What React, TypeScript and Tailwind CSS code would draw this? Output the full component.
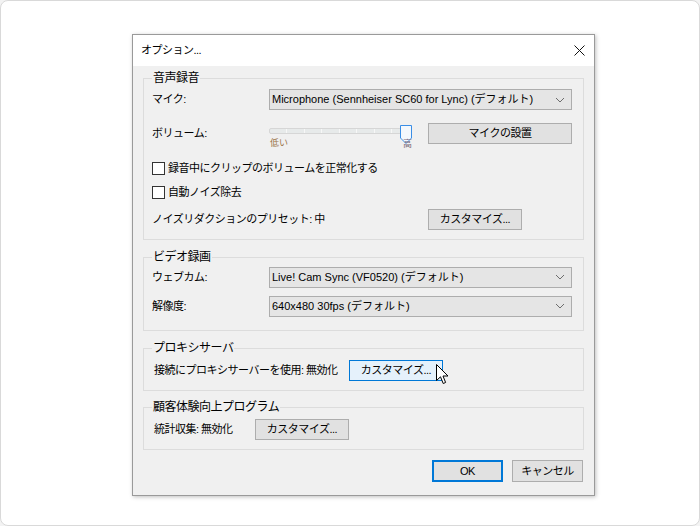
import React from "react";

const F = "font-['Liberation_Sans','Noto_Sans_CJK_JP',sans-serif]";
const J = "tracking-[-0.5px] whitespace-nowrap";

function Chevron() {
  return (
    <svg width="10" height="6" viewBox="0 0 10 6" className="shrink-0">
      <path d="M1 1 L5 5 L9 1" fill="none" stroke="#6d6d6d" strokeWidth="1" />
    </svg>
  );
}

function Select({ text }: { text: string }) {
  return (
    <div className="w-[303px] h-[21px] bg-[#e5e5e5] border border-[#adadad] flex items-center justify-between pl-[2px] pr-[6px] text-[11px] text-black">
      <span className="whitespace-nowrap">{text}</span>
      <Chevron />
    </div>
  );
}

function Btn({ text, w, hot, def }: { text: string; w: string; hot?: boolean; def?: boolean }) {
  const base = `h-[21px] flex items-center justify-center text-[11px] text-black shrink-0 ${J}`;
  let cls = "bg-[#e1e1e1] border border-[#adadad]";
  if (hot) cls = "bg-[#e5f1fb] border border-[#0078d7]";
  if (def) cls = "bg-[#e1e1e1] border-2 border-[#0078d7]";
  return <div className={`${base} ${cls} ${w}`}>{text}</div>;
}

function Group({
  title,
  children,
  className,
  legendClass,
}: {
  title: string;
  children: React.ReactNode;
  className?: string;
  legendClass?: string;
}) {
  return (
    <fieldset className={`border border-[#dcdcdc] ${className ?? ""}`}>
      <legend className={`px-[1px] text-[12px] leading-[16px] text-black ${J} ${legendClass ?? ""}`}>{title}</legend>
      {children}
    </fieldset>
  );
}

function Check({ text }: { text: string }) {
  return (
    <div className="flex items-center h-[16px] text-[11px] text-black">
      <div className="w-[13px] h-[13px] border border-[#333333] bg-white mr-[3px]" />
      <span className={J}>{text}</span>
    </div>
  );
}

function Slider() {
  return (
    <div className="relative w-[148px] h-[30px]">
      <div className="absolute left-0 top-[8px] w-[140px] h-[6px] rounded-[2px] border border-[#d6d6d6] bg-[#e7eaea] flex justify-between px-[16px]">
        {[0, 1, 2, 3, 4, 5, 6].map((i) => (
          <div key={i} className="w-px h-full bg-[#f7f7f7]" />
        ))}
      </div>
      <svg className="absolute left-[131px] top-[5px]" width="12" height="19" viewBox="0 0 12 19">
        <path d="M0.5 0.5 H11.5 V13 L6 18.5 L0.5 13 Z" fill="#f4f8fc" stroke="#3a8ee6" strokeWidth="1" />
      </svg>
      <span className="absolute left-[1px] top-[18px] text-[9px] leading-[11px] text-[#9a7448]">低い</span>
      <span className="absolute left-[134px] top-[19px] text-[9px] leading-[11px] text-[#7a6a7a]">高</span>
    </div>
  );
}

function Cursor() {
  return (
    <svg className="absolute left-[436px] top-[364px]" width="13" height="21" viewBox="0 0 13 21">
      <path d="M0.5 0.5 L0.5 16.5 L4.5 12.8 L7.2 19.5 L9.6 18.5 L7 12 L12 12 Z" fill="white" stroke="black" strokeWidth="1" strokeLinejoin="round" />
    </svg>
  );
}

export default function App() {
  return (
    <div className={`relative w-[700px] h-[526px] bg-[#f3f3f3] ${F}`}>
      <div className="w-[700px] h-[526px] bg-white border border-[#d9d9d9] rounded-[8px] pl-[131px] pt-[33px]">
        <div className="w-[463px] h-[462px] border border-[#9a9a9a] bg-[#f0f0f0] shadow-[1px_1px_4px_rgba(0,0,0,0.25)] flex flex-col">
          <div className="h-[31px] bg-white flex items-center justify-between pl-[8px] pr-[9px] shrink-0">
            <span className={`text-[11px] text-black ${J}`}>オプション...</span>
            <svg width="11" height="11" viewBox="0 0 11 11">
              <path d="M0.5 0.5 L10.5 10.5 M10.5 0.5 L0.5 10.5" stroke="#111" strokeWidth="1" />
            </svg>
          </div>
          <div className="flex-1 px-[10px] pt-[4px] flex flex-col">
            <Group title="音声録音" className="pl-[8px] pr-[11px] pb-[9px]">
              <div className="flex items-center h-[21px] mt-[3px] text-[11px] text-black">
                <span className={`w-[117px] ${J}`}>マイク:</span>
                <Select text="Microphone (Sennheiser SC60 for Lync) (デフォルト)" />
              </div>
              <div className="flex items-start h-[30px] mt-[10px] text-[11px] text-black">
                <span className={`w-[117px] mt-[5px] ${J}`}>ボリューム:</span>
                <Slider />
                <div className="ml-[11px] mt-[3px]">
                  <Btn text="マイクの設置" w="w-[144px]" />
                </div>
              </div>
              <div className="mt-[10px]">
                <Check text="録音中にクリップのボリュームを正常化する" />
              </div>
              <div className="mt-[8px]">
                <Check text="自動ノイズ除去" />
              </div>
              <div className="flex items-center h-[21px] mt-[9px] text-[11px] text-black">
                <span className={`w-[276px] ${J}`}>ノイズリダクションのプリセット: 中</span>
                <Btn text="カスタマイズ..." w="w-[94px]" />
              </div>
            </Group>
            <Group title="ビデオ録画" className="mt-[9px] pl-[8px] pr-[11px] pb-[13px]">
              <div className="flex items-center h-[22px] mt-[1px] text-[11px] text-black">
                <span className={`w-[117px] ${J}`}>ウェブカム:</span>
                <Select text="Live! Cam Sync (VF0520) (デフォルト)" />
              </div>
              <div className="flex items-center h-[22px] mt-[7px] text-[11px] text-black">
                <span className={`w-[117px] ${J}`}>解像度:</span>
                <Select text="640x480 30fps (デフォルト)" />
              </div>
            </Group>
            <Group title="プロキシサーバ" className="mt-[9px] pl-[10px] pr-[11px] pb-[9px]" legendClass="ml-[-2px]">
              <div className="flex items-center h-[21px] mt-[4px] text-[11px] text-black">
                <span className={`w-[195px] ${J}`}>接続にプロキシサーバーを使用: 無効化</span>
                <Btn text="カスタマイズ..." w="w-[94px]" hot />
              </div>
            </Group>
            <Group title="顧客体験向上プログラム" className="mt-[8px] pl-[10px] pr-[11px] pb-[9px]" legendClass="ml-[-2px]">
              <div className="flex items-center h-[21px] mt-[4px] text-[11px] text-black">
                <span className={`w-[101px] ${J}`}>統計収集: 無効化</span>
                <Btn text="カスタマイズ..." w="w-[94px]" />
              </div>
            </Group>
            <div className="flex justify-end gap-[9px] mt-[10px] pr-[1px]">
              <Btn text="OK" w="w-[71px] h-[22px]" def />
              <Btn text="キャンセル" w="w-[71px] h-[22px]" />
            </div>
          </div>
        </div>
      </div>
      <Cursor />
    </div>
  );
}
